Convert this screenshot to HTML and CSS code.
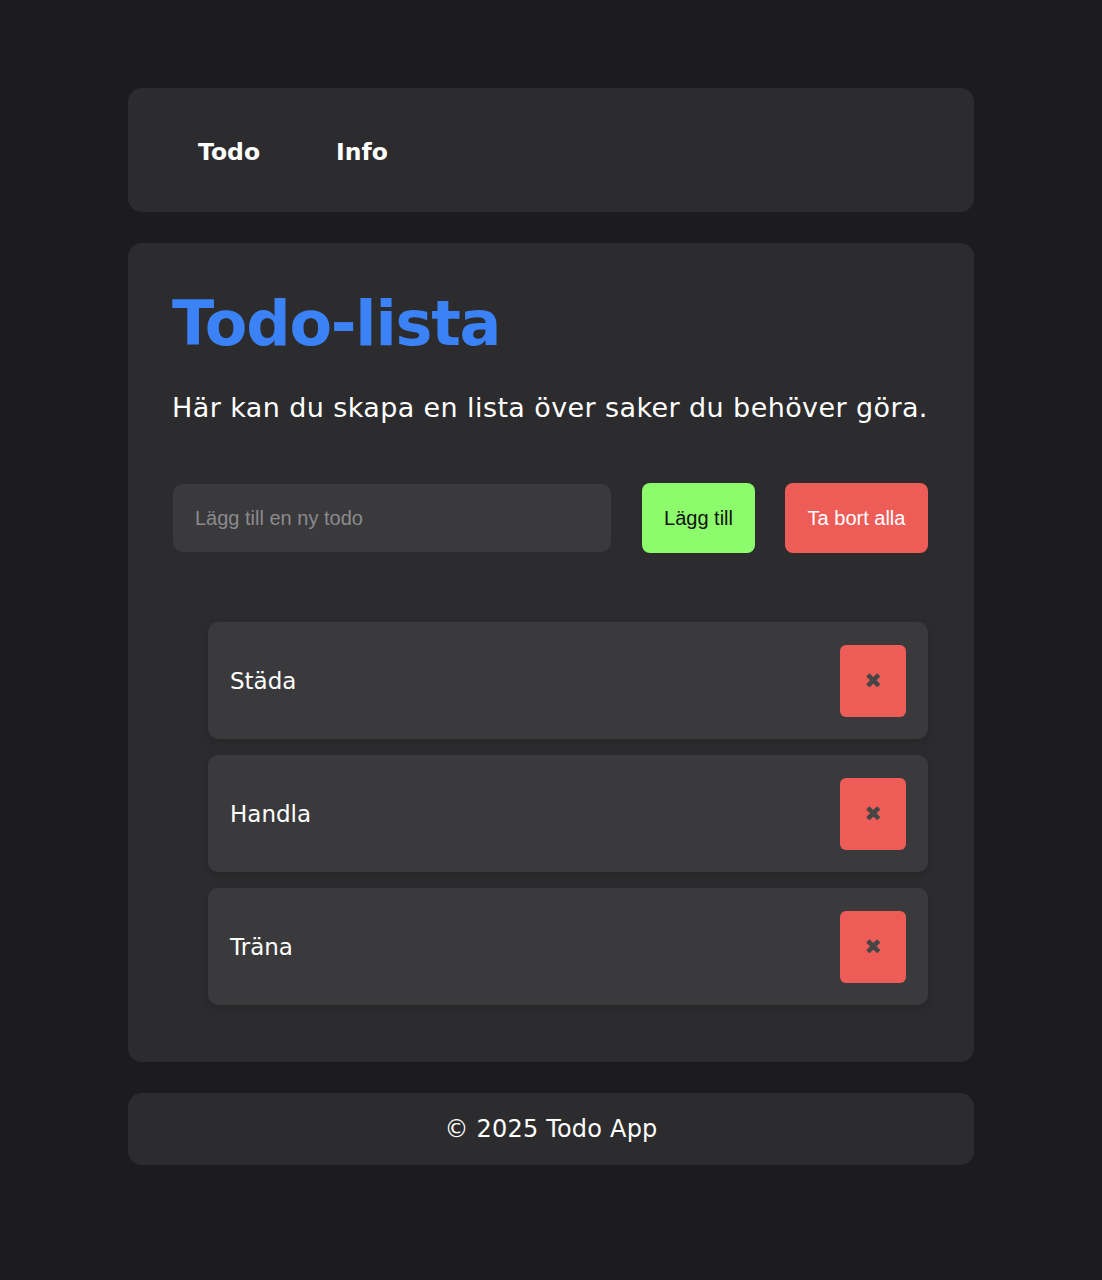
FILE: index.html
```html
<!DOCTYPE html>
<html lang="sv">
<head>
<meta charset="utf-8">
<title>Todo App</title>
<link rel="stylesheet" href="styles.css">
</head>
<body>
<div class="page">
  <nav class="card nav">
    <a class="nav-link" href="#">Todo</a>
    <a class="nav-link" href="#">Info</a>
  </nav>
  <main class="card main">
    <h1 class="title">Todo-lista</h1>
    <p class="lead">Här kan du skapa en lista över saker du behöver göra.</p>
    <div class="form">
      <input class="todo-input" type="text" placeholder="Lägg till en ny todo">
      <button class="btn btn-add">Lägg till</button>
      <button class="btn btn-clear">Ta bort alla</button>
    </div>
    <ul class="list">
      <li class="item"><span class="item-text">Städa</span><button class="del">&#x2716;</button></li>
      <li class="item"><span class="item-text">Handla</span><button class="del">&#x2716;</button></li>
      <li class="item"><span class="item-text">Träna</span><button class="del">&#x2716;</button></li>
    </ul>
  </main>
  <footer class="card footer">© 2025 Todo App</footer>
</div>
</body>
</html>
```
FILE: styles.css
```css
* { box-sizing: border-box; }
html, body { margin: 0; padding: 0; }
body {
  background: #1c1c1e;
  color: #fff;
  font-family: "DejaVu Sans", sans-serif;
}
.page {
  width: 846px;
  margin: 88px auto 0;
  display: flex;
  flex-direction: column;
  gap: 31px;
}
.card {
  background: #2c2c2e;
  border-radius: 14px;
}
.nav {
  height: 124px;
  display: flex;
  align-items: center;
  padding: 4px 0 0 70px;
  gap: 76px;
}
.nav-link {
  color: #fff;
  text-decoration: none;
  font-weight: bold;
  font-size: 23.5px;
}
.main {
  padding: 42px 46px 57px 44px;
}
.title {
  margin: 0;
  color: #3b82f6;
  font-size: 62px;
  font-weight: bold;
  letter-spacing: -1.2px;
  line-height: 78px;
}
.lead {
  margin: 25px 0 0;
  font-size: 27px;
  letter-spacing: 0.4px;
  line-height: 40px;
  white-space: nowrap;
}
.form {
  display: flex;
  align-items: center;
  margin-top: 55px;
}
.todo-input {
  width: 438px;
  height: 68px;
  margin-left: 1px;
  border: none;
  border-radius: 10px;
  background: #3a3a3c;
  padding: 0 22px;
  font-family: "Liberation Sans", Arial, sans-serif;
  font-size: 20px;
  color: #fff;
  outline: none;
}
.todo-input::placeholder { color: #8a8a8e; }
.btn {
  height: 70px;
  border: none;
  border-radius: 8px;
  font-family: "Liberation Sans", Arial, sans-serif;
  font-size: 20px;
  padding: 0;
  flex-shrink: 0;
}
.btn-add { background: #8cfc6c; color: #111; width: 113px; margin-left: 31px; }
.btn-clear { background: #ee5c58; color: #fff; width: 143px; margin-left: 30px; }
.list {
  list-style: none;
  margin: 69px 0 0;
  padding: 0 0 0 36px;
  display: flex;
  flex-direction: column;
  gap: 16px;
}
.item {
  height: 117px;
  background: #3a3a3c;
  border-radius: 10px;
  display: flex;
  align-items: center;
  justify-content: space-between;
  padding: 0 22px;
  box-shadow: 0 4px 10px rgba(0,0,0,0.15);
}
.item-text { font-size: 23px; }
.del {
  width: 66px;
  height: 72px;
  border: none;
  border-radius: 6px;
  background: #ee5c58;
  color: #454545;
  font-size: 21px;
  padding: 0;
  font-family: "DejaVu Sans", sans-serif;
}
.footer {
  height: 72px;
  display: flex;
  align-items: center;
  justify-content: center;
  font-size: 24px;
  letter-spacing: 0.2px;
}
```
